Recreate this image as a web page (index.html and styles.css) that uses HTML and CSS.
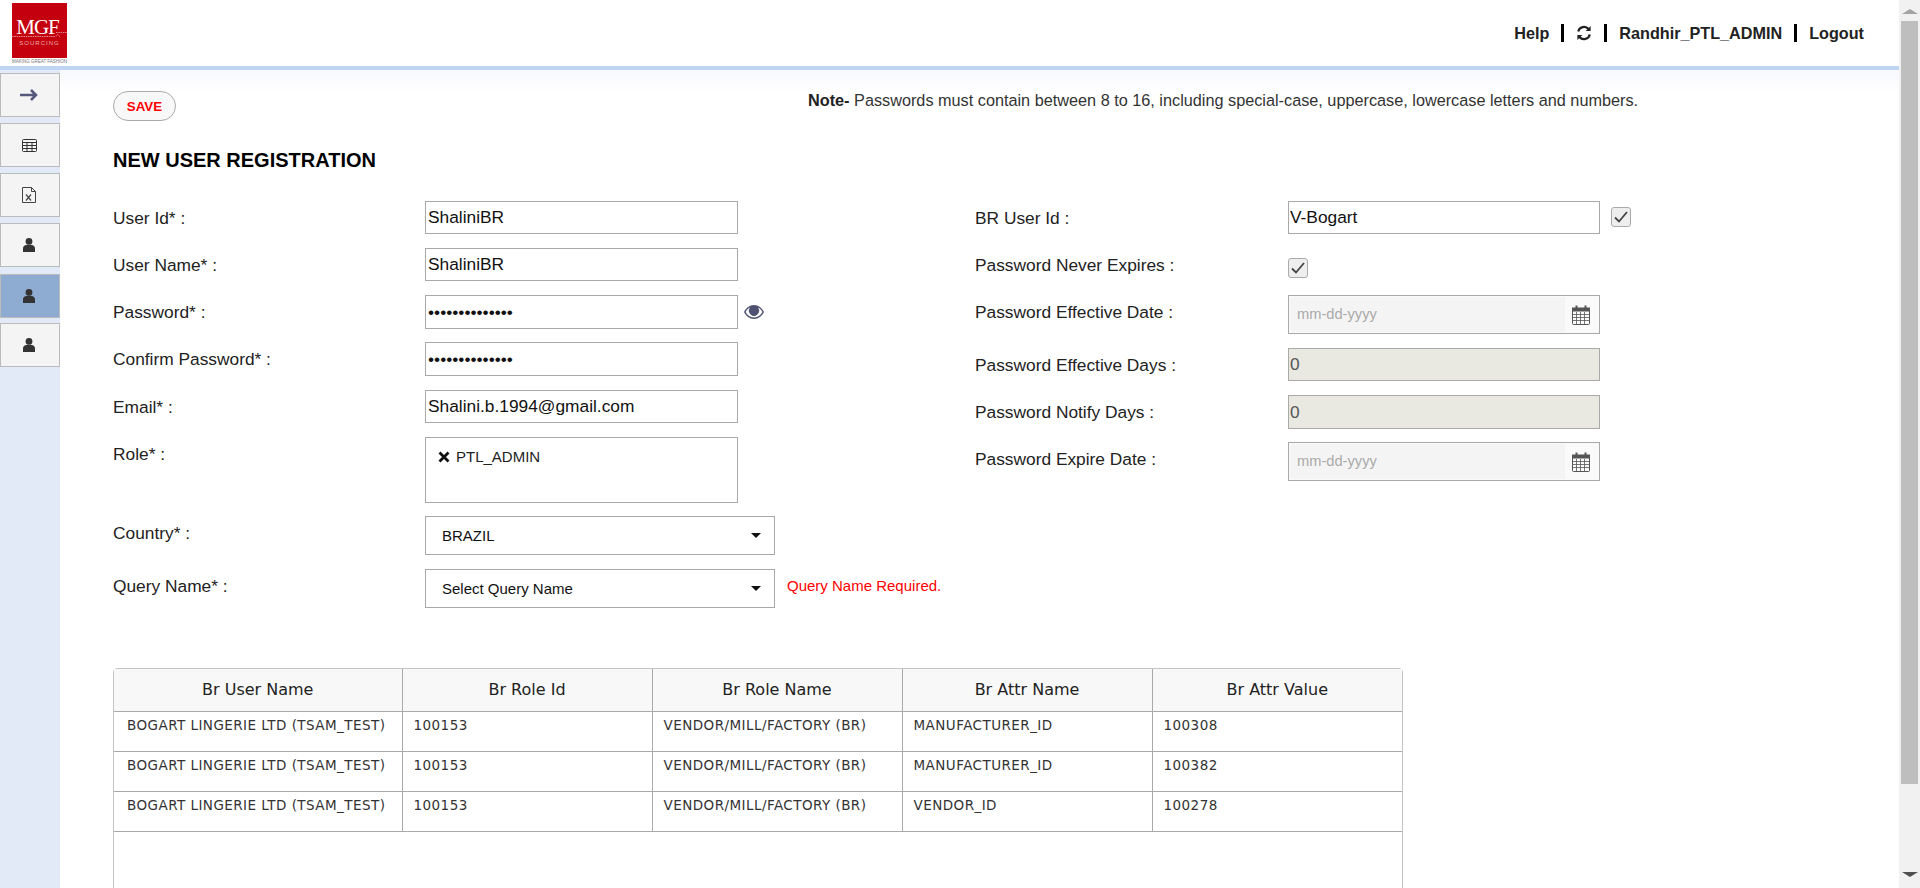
FILE: index.html
```html
<!DOCTYPE html>
<html lang="en">
<head>
  <meta charset="UTF-8">
  <meta name="viewport" content="width=device-width, initial-scale=1.0">
  <title>New User Registration</title>
  <link rel="stylesheet" href="styles.css">
</head>
<body>
  <div class="page">
    <header class="topbar">
      <div class="logo">
        <div class="logo-box">
          <span class="logo-mgf">MGF</span>
          <svg class="logo-line" viewBox="0 0 55 8" width="55" height="8" fill="none" stroke="#f3c4c4" stroke-width="0.700"><path d="M44 0.500h11M0 4.500h43c3 0 1-4 4-1l1 2" stroke-dasharray="1.500 0.800"/></svg>
          <span class="logo-sourcing">SOURCING</span>
        </div>
        <span class="logo-tag">MAKING GREAT FASHION</span>
      </div>
      <nav class="topnav">
        <a>Help</a>
        <span class="sep"></span>
        <svg class="refresh" viewBox="0 0 16 16" width="16" height="16" fill="none" stroke="#222" stroke-width="2.2">
          <path d="M2.2 6.6A6 6 0 0 1 12.6 4"/>
          <path d="M13.8 9.4A6 6 0 0 1 3.4 12"/>
          <path d="M14.6 1v5h-5z" fill="#222" stroke="none"/>
          <path d="M1.4 15v-5h5z" fill="#222" stroke="none"/>
        </svg>
        <span class="sep"></span>
        <a>Randhir_PTL_ADMIN</a>
        <span class="sep"></span>
        <a>Logout</a>
      </nav>
    </header>

    <div class="main">
      <aside class="sidebar">
        <button class="side-btn">
          <svg viewBox="0 0 18 12" width="18" height="12" fill="none" stroke="#55587a" stroke-width="2.500"><path d="M0 6h16M11 1l5 5-5 5"/></svg>
        </button>
        <button class="side-btn">
          <svg viewBox="0 0 15 13" width="15" height="13" fill="none" stroke="#333" stroke-width="1"><rect x="0.5" y="0.5" width="14" height="12" rx="1"/><path d="M0 3.5h15M0 6.5h15M0 9.5h15M5 3v10M10 3v10"/></svg>
        </button>
        <button class="side-btn">
          <svg viewBox="0 0 14 16" width="14" height="16" fill="none" stroke="#444" stroke-width="1"><path d="M0.5 0.5h9l4 4v11h-13zM9.5 0.5v4h4"/><path d="M4 7.5l5 6M9 7.5l-5 6" stroke-width="1.2"/></svg>
        </button>
        <button class="side-btn">
          <svg class="user" viewBox="0 0 12 14" width="12" height="14" fill="#333"><circle cx="6" cy="3.4" r="3.4"/><path d="M0 14v-3.5C0 8.2 1.6 7 3.4 7h5.2C10.400 7 12 8.200 12 10.500V14z"/></svg>
        </button>
        <button class="side-btn active">
          <svg class="user" viewBox="0 0 12 14" width="12" height="14" fill="#333"><circle cx="6" cy="3.4" r="3.4"/><path d="M0 14v-3.5C0 8.2 1.6 7 3.4 7h5.2C10.400 7 12 8.200 12 10.500V14z"/></svg>
        </button>
        <button class="side-btn">
          <svg class="user" viewBox="0 0 12 14" width="12" height="14" fill="#333"><circle cx="6" cy="3.4" r="3.4"/><path d="M0 14v-3.5C0 8.2 1.6 7 3.4 7h5.2C10.400 7 12 8.200 12 10.500V14z"/></svg>
        </button>
      </aside>

      <main class="content">
        <div class="save-row">
          <button class="btn-save">SAVE</button>
          <p class="note"><b>Note-</b> Passwords must contain between 8 to 16, including special-case, uppercase, lowercase letters and numbers.</p>
        </div>

        <h1>NEW USER REGISTRATION</h1>

        <form class="form">
          <div class="col col-left">
            <div class="row">
              <label>User Id* :</label>
              <input type="text" value="ShaliniBR">
            </div>
            <div class="row">
              <label>User Name* :</label>
              <input type="text" value="ShaliniBR">
            </div>
            <div class="row">
              <label>Password* :</label>
              <input class="tall" type="password" value="abcdefghijklmn">
              <svg class="eye" viewBox="0 0 20 14" width="20" height="14"><path d="M10 0C5.500 0 2 3 0 7c2 4 5.500 7 10 7s8-3 10-7c-2-4-5.500-7-10-7zm0 12.400C6.300 12.400 3.400 10.200 1.600 7c1.100-1.900 2.600-3.400 4.500-4.400a5 5 0 1 0 7.800 0c1.900 1 3.400 2.500 4.500 4.400-1.800 3.200-4.700 5.400-8.400 5.400z" fill="#4f5272"/><circle cx="10" cy="6.500" r="3.800" fill="#4f5272"/></svg>
            </div>
            <div class="row">
              <label>Confirm Password* :</label>
              <input class="tall" type="password" value="abcdefghijklmn">
            </div>
            <div class="row">
              <label>Email* :</label>
              <input type="text" value="Shalini.b.1994@gmail.com">
            </div>
            <div class="row">
              <label>Role* :</label>
              <div class="role-box">
                <svg viewBox="0 0 12 12" width="12" height="12" stroke="#111" stroke-width="2.800" fill="none"><path d="M1.500 1.500l9 9M10.500 1.500l-9 9"/></svg>
                <span>PTL_ADMIN</span>
              </div>
            </div>
            <div class="row">
              <label>Country* :</label>
              <div class="select"><span>BRAZIL</span><i class="caret"></i></div>
            </div>
            <div class="row">
              <label>Query Name* :</label>
              <div class="select"><span>Select Query Name</span><i class="caret"></i></div>
              <span class="error">Query Name Required.</span>
            </div>
          </div>

          <div class="col col-right">
            <div class="row">
              <label>BR User Id :</label>
              <input type="text" value="V-Bogart">
              <span class="check check-side"><svg viewBox="0 0 14 12" width="14" height="12" fill="none" stroke="#444" stroke-width="1.800"><path d="M1 6.500l4 4L13 1"/></svg></span>
            </div>
            <div class="row">
              <label>Password Never Expires :</label>
              <span class="check check-own"><svg viewBox="0 0 14 12" width="14" height="12" fill="none" stroke="#444" stroke-width="1.800"><path d="M1 6.500l4 4L13 1"/></svg></span>
            </div>
            <div class="row">
              <label>Password Effective Date :</label>
              <div class="date">
                <span class="date-text">mm-dd-yyyy</span>
                <span class="date-btn">
                  <svg viewBox="0 0 18 20" width="18" height="20" fill="none" stroke="#555"><path d="M0.500 3.500h17v15a1 1 0 0 1-1 1h-15a1 1 0 0 1-1-1z"/><path d="M0 2.500h18V6.500H0z" fill="#555" stroke="none"/><path d="M0.500 9.500h17M0.500 12.500h17M0.500 15.500h17M4.500 7v12M8.500 7v12M12.500 7v12" stroke-width="0.800"/><path d="M4.500 0.500v4M13.500 0.500v4" stroke="#555" stroke-width="2"/></svg>
                </span>
              </div>
            </div>
            <div class="row">
              <label>Password Effective Days :</label>
              <input class="disabled" type="text" value="0" disabled>
            </div>
            <div class="row">
              <label>Password Notify Days :</label>
              <input class="disabled tall" type="text" value="0" disabled>
            </div>
            <div class="row">
              <label>Password Expire Date :</label>
              <div class="date">
                <span class="date-text">mm-dd-yyyy</span>
                <span class="date-btn">
                  <svg viewBox="0 0 18 20" width="18" height="20" fill="none" stroke="#555"><path d="M0.500 3.500h17v15a1 1 0 0 1-1 1h-15a1 1 0 0 1-1-1z"/><path d="M0 2.500h18V6.500H0z" fill="#555" stroke="none"/><path d="M0.500 9.500h17M0.500 12.500h17M0.500 15.500h17M4.500 7v12M8.500 7v12M12.500 7v12" stroke-width="0.800"/><path d="M4.500 0.500v4M13.500 0.500v4" stroke="#555" stroke-width="2"/></svg>
                </span>
              </div>
            </div>
          </div>
        </form>

        <div class="grid-wrap">
          <table>
            <thead>
              <tr><th>Br User Name</th><th>Br Role Id</th><th>Br Role Name</th><th>Br Attr Name</th><th>Br Attr Value</th></tr>
            </thead>
            <tbody>
              <tr><td>BOGART LINGERIE LTD (TSAM_TEST)</td><td>100153</td><td>VENDOR/MILL/FACTORY (BR)</td><td>MANUFACTURER_ID</td><td>100308</td></tr>
              <tr><td>BOGART LINGERIE LTD (TSAM_TEST)</td><td>100153</td><td>VENDOR/MILL/FACTORY (BR)</td><td>MANUFACTURER_ID</td><td>100382</td></tr>
              <tr><td>BOGART LINGERIE LTD (TSAM_TEST)</td><td>100153</td><td>VENDOR/MILL/FACTORY (BR)</td><td>VENDOR_ID</td><td>100278</td></tr>
            </tbody>
          </table>
        </div>
      </main>
    </div>
  </div>

  <div class="scrollbar">
    <i class="arrow-up"></i>
    <div class="thumb"></div>
    <i class="arrow-down"></i>
  </div>
</body>
</html>
```

FILE: styles.css
```css
* {
  box-sizing: border-box;
}
html, body {
  height: 100%;
}
body {
  margin: 0;
  display: flex;
  overflow: hidden;
  font-family: "Liberation Sans", Arial, sans-serif;
  font-size: 16px;
  color: #222;
  background-color: white;
}
.page {
  flex: 1;
  min-width: 0;
  display: flex;
  flex-direction: column;
}

/* top bar */
.topbar {
  height: 70px;
  flex-shrink: 0;
  display: flex;
  justify-content: space-between;
  align-items: center;
  padding: 0 35px 0 12px;
  border-bottom: 4px solid #c0d5f2;
}
.logo {
  width: 60px;
  padding-top: 1px;
  display: flex;
  flex-direction: column;
}
.logo-box {
  width: 55px;
  height: 55px;
  background-color: #c4000f;
  color: white;
  display: flex;
  flex-direction: column;
  align-items: center;
  padding-top: 16px;
}
.logo-mgf {
  font-family: "Liberation Serif", serif;
  font-size: 21px;
  line-height: 17px;
  letter-spacing: -1px;
  margin-right: 4px;
}
.logo-line {
  margin-top: -4px;
}
.logo-sourcing {
  font-size: 6px;
  line-height: 7px;
  margin-top: 0;
  letter-spacing: 1px;
  color: #eeb0b0;
}
.logo-tag {
  font-size: 4.500px;
  line-height: 5px;
  margin-top: 1px;
  color: #777;
  white-space: nowrap;
}
.topnav {
  display: flex;
  align-items: center;
  font-weight: bold;
  font-size: 16.2px;
  color: #222;
}
.sep {
  width: 3px;
  height: 18px;
  margin: 0 12px;
  background-color: black;
}

/* sidebar */
.main {
  flex: 1;
  min-height: 0;
  display: flex;
}
.sidebar {
  width: 60px;
  flex-shrink: 0;
  background-color: #e3eaf7;
  padding-top: 3px;
  display: flex;
  flex-direction: column;
  gap: 6px;
}
.side-btn {
  width: 60px;
  height: 44px;
  padding: 0 2px 0 0;
  border: 1px solid #bbb;
  background-color: #f4f4f4;
  display: flex;
  justify-content: center;
  align-items: center;
}
.side-btn.active {
  background-color: #8eabd1;
  margin-top: 1px;
  margin-bottom: -1px;
}

/* content */
.content {
  flex: 1;
  min-width: 0;
  overflow: hidden;
  padding: 21px 0 0 53px;
  background: linear-gradient(#f7f8fc, white 22px);
}
.save-row {
  display: flex;
  height: 30px;
}
.btn-save {
  width: 63px;
  height: 30px;
  padding: 0;
  border: 1px solid #aaa;
  border-radius: 15px;
  background-color: #f8f8f8;
  color: red;
  font-family: inherit;
  font-weight: bold;
  font-size: 13.33px;
}
.note {
  margin: 0 0 0 632px;
  font-size: 16.25px;
  line-height: 18px;
  color: #333;
}
.note b {
  color: #222;
}
h1 {
  margin: 27px 0 29px;
  font-size: 20px;
  line-height: 24px;
  color: black;
}

/* form */
.form {
  display: flex;
}
.col {
  display: grid;
}
.col-left {
  width: 862px;
  grid-template-rows: 47px 47px 47px 48px 47px 79px 53px 39px;
}
.col-right {
  grid-template-rows: 47px 47px 53px 47px 47px 39px;
}
.row {
  display: flex;
  align-items: flex-start;
}
.row label {
  width: 312px;
  flex-shrink: 0;
  font-size: 17.33px;
  line-height: 35px;
  color: #222;
}
.col-right .row label {
  width: 313px;
}
.row input {
  width: 313px;
  height: 33px;
  padding: 0 2px;
  border: 1px solid #a9a9a9;
  background-color: white;
  font-family: inherit;
  font-size: 17.33px;
  color: #111;
  outline: none;
}
.col-right .row input {
  width: 312px;
  padding: 0 1px;
}
.row input.tall {
  height: 34px;
}
.row input.disabled {
  background-color: #e9e8e1;
  color: #555;
}
.eye {
  margin: 10px 0 0 6px;
}
.role-box {
  width: 313px;
  height: 66px;
  border: 1px solid #a9a9a9;
  padding: 10px 12px;
  display: flex;
  gap: 6px;
  font-size: 15px;
  line-height: 18px;
}
.role-box svg {
  margin-top: 3px;
}
.select {
  width: 350px;
  height: 39px;
  border: 1px solid #a9a9a9;
  padding: 0 13px 0 16px;
  display: flex;
  justify-content: space-between;
  align-items: center;
  font-size: 15px;
  color: #111;
}
.caret {
  border-top: 5px solid #111;
  border-left: 5px solid transparent;
  border-right: 5px solid transparent;
}
.error {
  margin: 8px 0 0 12px;
  font-size: 15px;
  line-height: 18px;
  color: red;
  white-space: nowrap;
}
.check {
  width: 20px;
  height: 20px;
  border: 1px solid #aaa;
  border-radius: 3px;
  background-color: #eee;
  display: flex;
  justify-content: center;
  align-items: center;
}
.check-side {
  margin: 6px 0 0 11px;
}
.check-own {
  margin-top: 10px;
}
.date {
  width: 312px;
  height: 39px;
  border: 1px solid #a9a9a9;
  padding: 1px;
  display: flex;
  background-color: #fafafa;
}
.date-text {
  flex: 1;
  padding-left: 7px;
  border-radius: 3px 0 0 3px;
  background-color: #f4f4f4;
  color: #aaa;
  font-size: 14.67px;
  line-height: 35px;
}
.date-btn {
  width: 33px;
  display: flex;
  justify-content: center;
  align-items: center;
  padding-right: 1px;
}

/* table */
.grid-wrap {
  width: 1290px;
  height: 300px;
  margin-top: 60px;
  border: 1px solid #c4c4c4;
  border-radius: 4px 4px 0 0;
}
table {
  width: 100%;
  table-layout: fixed;
  border-collapse: collapse;
  font-family: "DejaVu Sans", sans-serif;
}
th, td {
  border-bottom: 1px solid #aaa;
  border-right: 1px solid #aaa;
}
th:last-child, td:last-child {
  border-right: none;
}
th:first-child, td:first-child {
  width: 288px;
}
th {
  height: 42px;
  background-color: #f8f8f8;
  font-weight: normal;
  font-size: 16px;
  color: #222;
}
td {
  height: 40px;
  padding: 5px 13px 0 11px;
  vertical-align: top;
  font-size: 13.5px;
  letter-spacing: 0.450px;
  line-height: 16px;
  color: #333;
  white-space: nowrap;
}
td:first-child {
  padding-left: 13px;
}

/* page scrollbar */
.scrollbar {
  width: 21px;
  flex-shrink: 0;
  background-color: #f1f1f1;
  padding: 9px 2px 0;
  display: flex;
  flex-direction: column;
  align-items: center;
}
.arrow-up {
  border-bottom: 5px solid #a3a3a3;
  border-left: 8px solid transparent;
  border-right: 8px solid transparent;
}
.thumb {
  width: 17px;
  height: 763px;
  margin-top: 7px;
  background-color: #bebebe;
}
.arrow-down {
  margin-top: 88px;
  border-top: 5px solid #505050;
  border-left: 8px solid transparent;
  border-right: 8px solid transparent;
}
```
